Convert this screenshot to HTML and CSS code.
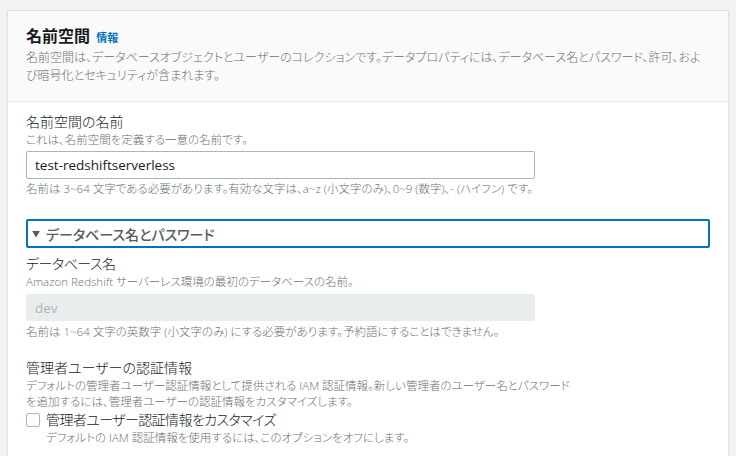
FILE: index.html
```html
<!DOCTYPE html>
<html lang="ja">
  <head>
    <meta charset="UTF-8" />
    <title>名前空間</title>
    <link rel="stylesheet" href="styles.css">
  </head>
  <body>
    <div class="container">
      <!-- Namespace card -->
      <div class="card">
        <div class="card-header">
          <h2>名前空間 <a href="#" class="info">情報</a></h2>
          <p class="header-desc">
            名前空間は、データベースオブジェクトとユーザーのコレクションです。データプロパティには、データベース名とパスワード、許可、およ<br />び暗号化とセキュリティが含まれます。
          </p>
        </div>

        <div class="card-body">
          <div class="field">
            <label class="label" for="ns-name">名前空間の名前</label>
            <div class="desc">これは、名前空間を定義する一意の名前です。</div>
            <input type="text" id="ns-name" class="input" value="test-redshiftserverless" />
            <div class="hint">名前は 3~64 文字である必要があります。有効な文字は、a~z (小文字のみ)、0~9 (数字)、- (ハイフン) です。</div>
          </div>

          <div class="expander">
            <span class="caret">&#9660;</span>
            <span class="expander-title">データベース名とパスワード</span>
          </div>

          <div class="field">
            <label class="label label-lg" for="db-name">データベース名</label>
            <div class="desc">Amazon Redshift サーバーレス環境の最初のデータベースの名前。</div>
            <input type="text" id="db-name" class="input input-disabled" placeholder="dev" disabled />
            <div class="hint">名前は 1~64 文字の英数字 (小文字のみ) にする必要があります。予約語にすることはできません。</div>
          </div>

          <div class="field field-admin">
            <div class="label">管理者ユーザーの認証情報</div>
            <div class="desc">
              デフォルトの管理者ユーザー認証情報として提供される IAM 認証情報。新しい管理者のユーザー名とパスワード<br />を追加するには、管理者ユーザーの認証情報をカスタマイズします。
            </div>
            <label class="checkbox-row">
              <span class="checkbox"></span>
              <span class="checkbox-text">
                <span class="checkbox-label">管理者ユーザー認証情報をカスタマイズ</span>
                <span class="checkbox-desc">デフォルトの IAM 認証情報を使用するには、このオプションをオフにします。</span>
              </span>
            </label>
          </div>
        </div>
      </div>
    </div>
  </body>
</html>
```

FILE: styles.css
```css
/* General Styles */
body {
  margin: 0;
  padding: 0;
  background: #f2f3f3;
  font-family: "Open Sans", "Noto Sans CJK JP", sans-serif;
  font-feature-settings: "palt";
  font-weight: 300;
  color: #16191f;
  overflow: hidden;
}

.container {
  padding: 10px 7px 0 7px;
}

.card {
  width: 720px;
  background: #ffffff;
  border: 1px solid #dfe3e3;
  border-bottom: none;
  box-shadow: 0 1px 1px rgba(0, 28, 36, 0.15);
}

/* Header */
.card-header {
  background: #fafafa;
  border-bottom: 1px solid #eaeded;
  padding: 14px 18px 16px 18px;
}

h2 {
  margin: 0;
  font-size: 16px;
  line-height: 22px;
  font-weight: 700;
  color: #16191f;
}

.info {
  font-size: 11px;
  font-weight: 700;
  color: #0073bb;
  text-decoration: none;
  margin-left: 2px;
}

.header-desc {
  margin: 0;
  font-size: 12px;
  line-height: 18px;
  color: #687078;
  white-space: nowrap;
}

/* Body */
.card-body {
  padding: 10px 18px 20px 18px;
}

.field {
  display: flex;
  flex-direction: column;
  align-items: flex-start;
}

.label {
  font-size: 14px;
  line-height: 20px;
  color: #16191f;
}

.label-lg {
  letter-spacing: -0.5px;
}

.desc {
  font-size: 11.5px;
  line-height: 16px;
  color: #687078;
  white-space: nowrap;
}

.input {
  box-sizing: border-box;
  width: 509px;
  height: 28px;
  margin-top: 3px;
  padding: 0 8px;
  border: 1px solid #aab7b8;
  border-radius: 2px;
  font-family: "Open Sans", "Noto Sans CJK JP", sans-serif;
  font-size: 13.5px;
  color: #16191f;
  background: #ffffff;
}

.input-disabled {
  height: 27px;
  margin-top: 4px;
  margin-bottom: 1px;
  background: #eaeded;
  border-color: #eaeded;
}

.input-disabled::placeholder {
  color: #aab7b8;
}

.hint {
  margin-top: 2px;
  font-size: 11.5px;
  line-height: 16px;
  color: #687078;
  white-space: nowrap;
}

/* Expandable section */
.expander {
  margin-top: 22px;
  margin-bottom: 6px;
  height: 29px;
  box-sizing: border-box;
  border: 2px solid #0073bb;
  border-radius: 2px;
  display: flex;
  align-items: center;
  padding-left: 4px;
  gap: 6px;
}

.caret {
  font-size: 8px;
  color: #545b64;
}

.expander-title {
  font-size: 14px;
  font-weight: 500;
  color: #545b64;
}

/* Admin credentials */
.field-admin {
  margin-top: 18px;
}

.checkbox-row {
  display: flex;
  align-items: flex-start;
  gap: 6px;
}

.checkbox {
  width: 14px;
  height: 14px;
  box-sizing: border-box;
  border: 1px solid #aab7b8;
  border-radius: 2px;
  background: #ffffff;
  margin-top: 3px;
}

.checkbox-text {
  display: flex;
  flex-direction: column;
}

.checkbox-label {
  font-size: 14px;
  line-height: 20px;
  letter-spacing: -0.6px;
  color: #16191f;
}

.checkbox-desc {
  font-size: 11.5px;
  line-height: 16px;
  color: #687078;
  white-space: nowrap;
}
```
